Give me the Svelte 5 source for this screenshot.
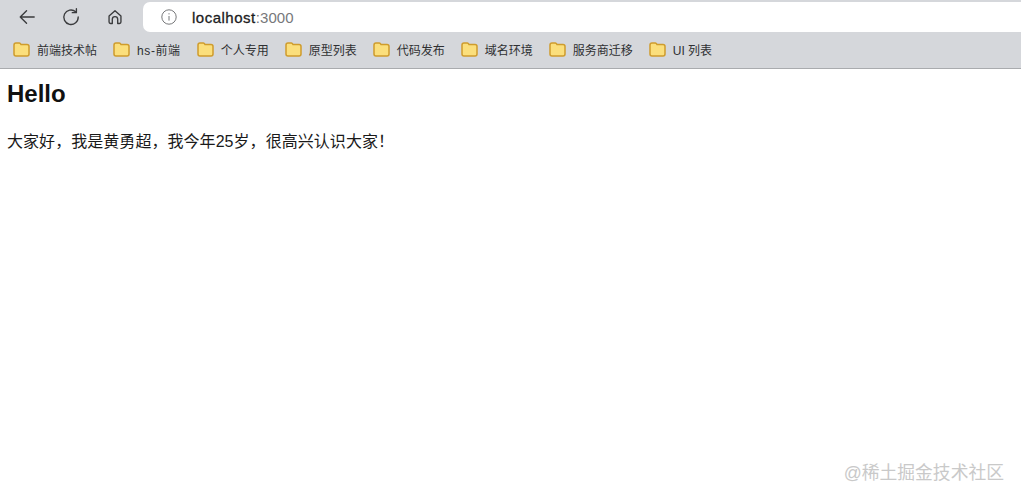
<script>
  const bookmarks = ['前端技术帖', 'hs-前端', '个人专用', '原型列表', '代码发布', '域名环境', '服务商迁移', 'UI 列表'];
</script>

<div class="page">
  <header class="chrome">
    <div class="toolbar">
      <div class="nav">
        <svg class="icon" viewBox="0 0 20 20" aria-hidden="true">
          <path d="M18 10H2.5M9.5 3 2.5 10l7 7" />
        </svg>
        <svg class="icon" viewBox="0 0 20 20" aria-hidden="true">
          <path d="M15.2 4.2A8 8 0 1 0 18 10" />
          <path d="M16 .8v4.4h-4.6" />
        </svg>
        <svg class="icon" viewBox="0 0 20 20" aria-hidden="true">
          <path d="M3.4 9 10 3l6.6 6v6.6a1.6 1.6 0 0 1-1.6 1.6h-2v-4.7a3 3 0 0 0-6 0v4.7H5a1.6 1.6 0 0 1-1.6-1.6Z" />
        </svg>
      </div>
      <div class="omnibox">
        <svg class="info" viewBox="0 0 16 16" aria-hidden="true">
          <circle cx="8" cy="8" r="7.2" />
          <path d="M8 7v4.6M8 4.2v1.2" />
        </svg>
        <span class="url"><b>localhost</b><i>:3000</i></span>
      </div>
    </div>
    <nav class="bookmarks">
      {#each bookmarks as name}
        <span class="bookmark" class:latin={name.startsWith('hs')}>
          <svg class="folder" viewBox="0 0 17 15" aria-hidden="true">
            <path d="M1 3a2 2 0 0 1 2-2h3.2a1.5 1.5 0 0 1 1.2.6l.6.9H14a2 2 0 0 1 2 2V12a2 2 0 0 1-2 2H3a2 2 0 0 1-2-2Z" />
          </svg>
          <span>{name}</span>
        </span>
      {/each}
    </nav>
  </header>

  <main class="content">
    <h1>Hello</h1>
    <p>大家好，我是黄勇超，我今年25岁，很高兴认识大家！</p>
  </main>

  <div class="watermark">@稀土掘金技术社区</div>
</div>

<style>
  :global(body) {
    margin: 0;
    background: #fff;
  }

  .page {
    position: relative;
    height: 500px;
    overflow: hidden;
    font-family: "Liberation Sans", "Noto Sans CJK SC", sans-serif;
    color: #111;
  }

  .chrome {
    background: #d5d7db;
    border-bottom: 1px solid #a9abae;
  }

  .toolbar {
    display: flex;
    align-items: center;
    height: 34px;
  }

  .nav {
    display: flex;
    align-items: center;
    gap: 26px;
    width: 143px;
    padding-left: 18px;
    box-sizing: border-box;
    flex: none;
  }

  .icon {
    width: 18px;
    height: 18px;
    flex: none;
    fill: none;
    stroke: #3a3b3d;
    stroke-width: 1.5;
    stroke-linecap: round;
    stroke-linejoin: round;
  }

  .omnibox {
    flex: 1;
    height: 30px;
    background: #fff;
    border-radius: 7px 0 0 7px;
    display: flex;
    align-items: center;
    padding-left: 18px;
    gap: 15px;
  }

  .info {
    width: 16px;
    height: 16px;
    fill: none;
    stroke: #77787a;
    stroke-width: 1;
  }

  .url {
    font-size: 15px;
  }

  .url b {
    font-weight: 400;
    letter-spacing: 0.5px;
    color: #1c1c1e;
    -webkit-text-stroke: 0.3px #1c1c1e;
  }

  .url i {
    font-style: normal;
    letter-spacing: 0.1px;
    color: #77787b;
  }

  .bookmarks {
    display: flex;
    align-items: center;
    gap: 16px;
    height: 31px;
    padding-bottom: 3px;
    padding-left: 13px;
    font-size: 12px;
    color: #2f3032;
  }

  .bookmark {
    display: flex;
    align-items: center;
    gap: 7px;
  }

  .latin {
    letter-spacing: 0.6px;
  }

  .folder {
    width: 17px;
    height: 15px;
    flex: none;
    fill: #fbdf7c;
    stroke: #cf9c2c;
    stroke-width: 1.5;
  }

  .content {
    padding: 0 7px;
  }

  h1 {
    margin: 0;
    padding-top: 11px;
    font-size: 24px;
    line-height: 28px;
    font-weight: 700;
    color: #111;
  }

  p {
    margin: 0;
    padding-top: 22px;
    font-size: 16px;
    line-height: 24px;
    letter-spacing: 0.05px;
    color: #1a1a1a;
  }

  .watermark {
    position: absolute;
    right: 17px;
    bottom: 16px;
    font-size: 17.8px;
    line-height: 22px;
    color: #c9c9c9;
  }
</style>
